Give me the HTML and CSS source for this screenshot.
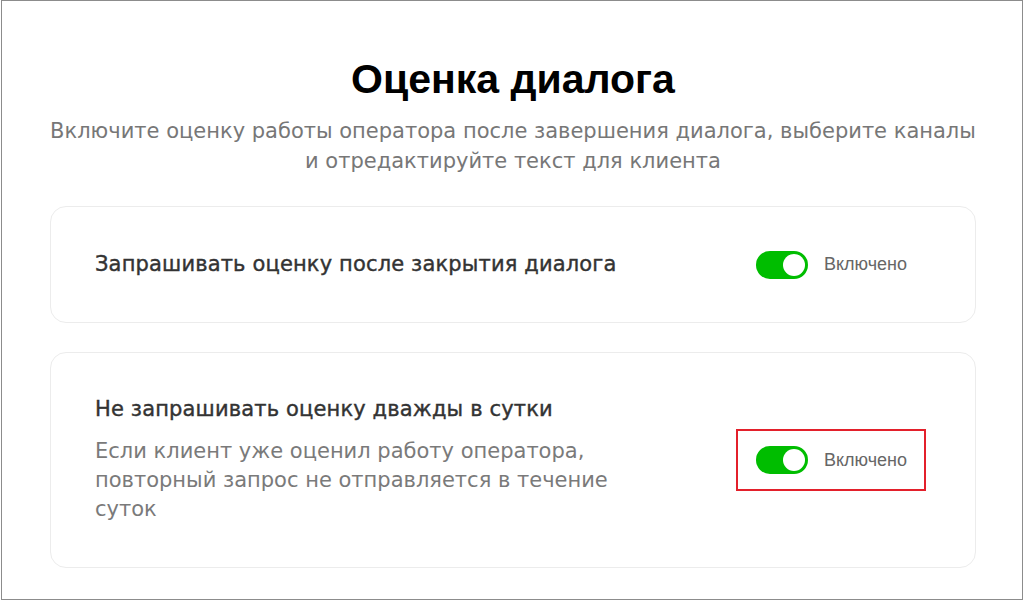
FILE: index.html
```html
<!DOCTYPE html>
<html lang="ru">
<head>
<meta charset="utf-8">
<link rel="stylesheet" href="styles.css">
</head>
<body>
<div class="frame">
  <div class="content">
    <h1 class="title">Оценка диалога</h1>
    <p class="subtitle">Включите оценку работы оператора после завершения диалога, выберите каналы<br>и отредактируйте текст для клиента</p>
    <div class="card card-one">
      <div class="card-text">
        <div class="card-title">Запрашивать оценку после закрытия диалога</div>
      </div>
      <div class="switch-wrap">
        <span class="switch"><span class="knob"></span></span>
        <span class="switch-label">Включено</span>
      </div>
    </div>
    <div class="card card-two">
      <div class="card-text">
        <div class="card-title">Не запрашивать оценку дважды в сутки</div>
        <div class="card-desc">Если клиент уже оценил работу оператора, повторный запрос не отправляется в течение суток</div>
      </div>
      <div class="switch-wrap highlighted">
        <span class="switch"><span class="knob"></span></span>
        <span class="switch-label">Включено</span>
      </div>
    </div>
  </div>
</div>
</body>
</html>
```
FILE: styles.css
```css
html, body {
  margin: 0;
  padding: 0;
  background: #fff;
}
.frame {
  box-sizing: border-box;
  margin-left: 1px;
  width: 1022px;
  height: 600px;
  border: 1px solid #8c8c8c;
  overflow: hidden;
}
.content {
  width: 926px;
  padding-top: 53px;
  margin-left: 48px;
}
.title {
  margin: 0;
  text-align: center;
  font-family: "Liberation Sans", Arial, sans-serif;
  font-weight: 700;
  font-size: 41px;
  line-height: 50px;
  color: #000;
}
.subtitle {
  margin: 12px 0 0;
  text-align: center;
  font-family: "DejaVu Sans", sans-serif;
  font-size: 21px;
  line-height: 30px;
  color: #777;
  white-space: nowrap;
}
.card {
  box-sizing: border-box;
  display: flex;
  align-items: center;
  justify-content: space-between;
  border: 1px solid #ececec;
  border-radius: 16px;
  padding: 0 44px;
}
.card-one {
  margin-top: 30px;
  height: 117px;
}
.card-two {
  margin-top: 29px;
  height: 216px;
}
.card-text {
  width: 580px;
  margin-top: -2px;
}
.card-title {
  font-family: "DejaVu Sans", sans-serif;
  font-size: 21px;
  letter-spacing: 0.15px;
  line-height: 28px;
  color: #333;
  -webkit-text-stroke: 0.4px #333;
}
.card-desc {
  margin-top: 14px;
  font-family: "DejaVu Sans", sans-serif;
  font-size: 21px;
  line-height: 29px;
  color: #7a7a7a;
  width: 540px;
}
.switch-wrap {
  box-sizing: border-box;
  display: flex;
  align-items: center;
  gap: 16px;
  width: 190px;
  height: 62px;
  padding-left: 18px;
  margin-right: 5px;
  border: 2px solid transparent;
}
.switch-wrap.highlighted {
  border-color: #e3202b;
}
.switch {
  position: relative;
  display: inline-block;
  width: 52px;
  height: 28px;
  border-radius: 14px;
  background: #00bd00;
}
.knob {
  position: absolute;
  right: 3px;
  top: 3px;
  width: 22px;
  height: 22px;
  border-radius: 50%;
  background: #fff;
}
.switch-label {
  font-family: "Liberation Sans", Arial, sans-serif;
  font-size: 18px;
  color: #666;
}
```
